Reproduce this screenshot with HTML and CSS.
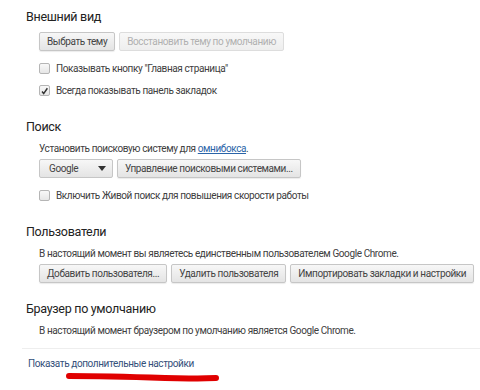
FILE: index.html
```html
<!DOCTYPE html>
<html lang="ru">
<head>
  <meta charset="UTF-8" />
  <title>Настройки</title>
  <link rel="stylesheet" href="styles.css">
</head>
<body>
  <div class="settings">
    <section class="section">
      <h3>Внешний вид</h3>
      <div class="body">
        <div class="row">
          <button class="btn">Выбрать тему</button>
          <button class="btn" disabled>Восстановить тему по умолчанию</button>
        </div>
        <label class="check"><span class="box"></span>Показывать кнопку "Главная страница"</label>
        <label class="check"><span class="box"><svg width="11" height="11" viewBox="0 0 11 11"><path d="M2.5 5.5 L4.5 8 L9 1.5" fill="none" stroke="#333" stroke-width="1.8"/></svg></span>Всегда показывать панель закладок</label>
      </div>
    </section>

    <section class="section">
      <h3>Поиск</h3>
      <div class="body">
        <p class="note">Установить поисковую систему для <a href="#" class="inline-link">омнибокса</a>.</p>
        <div class="row">
          <div class="select">Google <span class="arrow"></span></div>
          <button class="btn">Управление поисковыми системами...</button>
        </div>
        <label class="check"><span class="box"></span>Включить Живой поиск для повышения скорости работы</label>
      </div>
    </section>

    <section class="section">
      <h3>Пользователи</h3>
      <div class="body">
        <p class="note">В настоящий момент вы являетесь единственным пользователем Google Chrome.</p>
        <div class="row">
          <button class="btn">Добавить пользователя...</button>
          <button class="btn">Удалить пользователя</button>
          <button class="btn">Импортировать закладки и настройки</button>
        </div>
      </div>
    </section>

    <section class="section">
      <h3>Браузер по умолчанию</h3>
      <div class="body">
        <p class="note">В настоящий момент браузером по умолчанию является Google Chrome.</p>
      </div>
    </section>
  </div>

  <div class="footer">
    <a href="#" class="more">Показать дополнительные настройки</a>
    <svg class="scribble" width="156" height="10" viewBox="0 0 156 10">
      <path d="M4 4 C 40 4, 70 5, 100 6 S 140 6, 151 6" fill="none" stroke="#e00000" stroke-width="6" stroke-linecap="round"/>
    </svg>
  </div>
</body>
</html>
```

FILE: styles.css
```css
body {
  margin: 0;
  font-family: Roboto, 'Noto Sans', sans-serif;
  font-size: 10px;
  letter-spacing: -0.4px;
  color: #404040;
  background-color: white;
}
.settings {
  padding: 8px 0 0 26px;
}
.section {
  margin-bottom: 17px;
}
.section:last-child {
  margin-bottom: 0;
}
.section h3 {
  margin: 0 0 6px;
  font-size: 12.5px;
  font-weight: normal;
  letter-spacing: -0.3px;
  color: #222;
  line-height: 18px;
}
.body {
  padding-left: 13px;
}
.row {
  display: flex;
  gap: 4px;
  white-space: nowrap;
}
.row + .check {
  margin-top: 6px;
}
.btn {
  height: 19px;
  padding: 0 7px;
  font-family: inherit;
  font-size: 10px;
  letter-spacing: -0.4px;
  color: #444;
  background: linear-gradient(#f7f7f7, #e4e4e4);
  border: 1px solid #c6c6c6;
  border-radius: 2px;
  box-shadow: 0 1px 1px rgba(0,0,0,0.08);
}
.btn:disabled {
  color: #b0b0b0;
  background: linear-gradient(#f8f8f8, #eeeeee);
  border-color: #dddddd;
  box-shadow: none;
}
.check {
  display: flex;
  align-items: center;
  gap: 6px;
  height: 22px;
  white-space: nowrap;
}
.box {
  width: 11px;
  height: 11px;
  box-sizing: border-box;
  border: 1px solid #b5b5b5;
  border-radius: 2px;
  background: linear-gradient(#f8f8f8, #e6e6e6);
  display: flex;
  overflow: visible;
}
.note {
  margin: -1px 0 2px;
  line-height: 16px;
  white-space: nowrap;
}
.inline-link {
  color: #2a64a8;
}
.select {
  width: 74px;
  height: 19px;
  box-sizing: border-box;
  padding: 0 6px 0 9px;
  display: flex;
  align-items: center;
  justify-content: space-between;
  color: #444;
  background: linear-gradient(#f7f7f7, #e4e4e4);
  border: 1px solid #c6c6c6;
  border-radius: 2px;
}
.arrow {
  width: 0;
  height: 0;
  border-left: 4px solid transparent;
  border-right: 4px solid transparent;
  border-top: 5px solid #333;
}
.footer {
  margin: 9px 0 0 22px;
  border-top: 1px solid #eee;
  padding: 7px 0 0 6px;
}
.more {
  display: block;
  color: #34507a;
  text-decoration: none;
  line-height: 16px;
}
.scribble {
  display: block;
  margin: 0 0 0 37px;
}
```
